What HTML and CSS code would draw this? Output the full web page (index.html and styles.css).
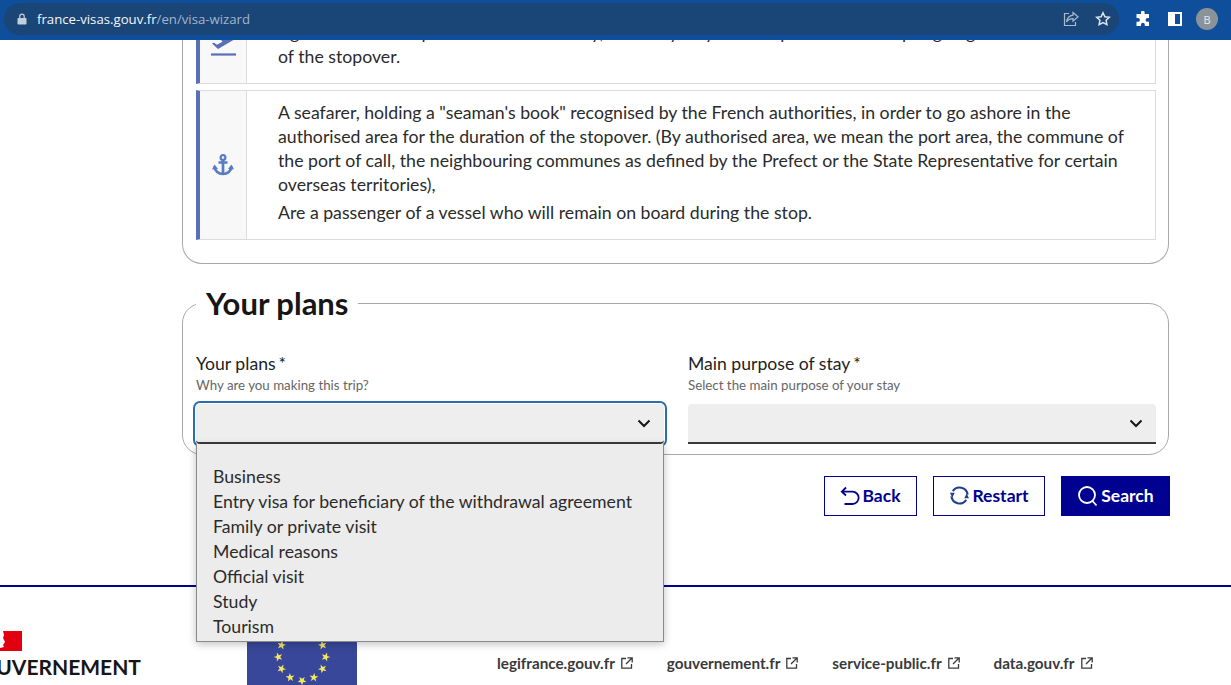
FILE: index.html
```html
<!DOCTYPE html>
<html lang="en">
<head>
    <meta charset="UTF-8">
    <meta name="viewport" content="width=device-width, initial-scale=1.0">
    <title>France-Visas - Visa wizard</title>
    <link rel="stylesheet" href="styles.css">
</head>
<body>
    <div class="browser-bar">
        <div class="address-pill">
            <svg class="lock-icon" viewBox="0 0 10 12" width="10" height="12"><path d="M2.2 5V3.4a2.8 2.8 0 0 1 5.6 0V5h.9c.5 0 .8.4.8.8v5c0 .5-.3.8-.8.8H1.300c-.5 0-.8-.3-.8-.8v-5c0-.4.3-.8.8-.8zm1.200 0h3.200V3.400a1.600 1.600 0 0 0-3.200 0z" fill="#c4cfdc"/></svg>
            <span class="url"><span class="url-host">france-visas.gouv.fr</span>/en/visa-wizard</span>
            <svg class="pill-icon" viewBox="0 0 16 16" width="16" height="16"><path d="M10 1.500l5 4.300-5 4.300V7.600c-3 0-5 1-6.500 3.400C4 7.500 6 4.700 10 4.200zM6 2.500H1.500v12h11V11" fill="none" stroke="#a9bbd0" stroke-width="1.200"/></svg>
            <svg class="pill-icon" viewBox="0 0 16 16" width="16" height="16"><path d="M8 1.800l1.900 4 4.400.5-3.200 3 .8 4.400L8 11.600l-3.900 2.100.8-4.400-3.200-3 4.400-.5z" fill="none" stroke="#dfe6ee" stroke-width="1.500"/></svg>
        </div>
        <div class="browser-actions">
            <svg viewBox="0 0 16 16" width="16" height="16"><path d="M6 1.500a1.800 1.800 0 0 1 3.600 0V3H14v4h-1.500a1.900 1.900 0 0 0 0 3.800H14V15H9.800v-1.300a1.900 1.900 0 0 0-3.800 0V15H1.500v-4.200H3a1.900 1.900 0 0 0 0-3.800H1.500V3H6z" fill="#fff"/></svg>
            <svg viewBox="0 0 14 14" width="14" height="14"><path d="M0 0h14v14H0zM7 2v10h5V2z" fill="#fff" fill-rule="evenodd"/></svg>
            <span class="avatar">B</span>
        </div>
    </div>

    <main class="page">
        <section class="wizard">
            <div class="exemption-box">
                <div class="exemption-card exemption-card-cut">
                    <div class="exemption-icon">
                        <svg viewBox="0 0 26 40" width="26" height="40"><path d="M2 24.500l2-.8 3 2 5.500-2.900-4-4.800 3-1 7.500 3.800 4.500-2.400c1-.5 2.300-.4 2.300.4l-.3 1-17.500 10.200z" fill="#5a6fb8"/><path d="M1 35.500h25" stroke="#5a6fb8" stroke-width="2.200"/></svg>
                    </div>
                    <div class="exemption-text">
                        <p>Agents on the sea port or the area nearby, who may stay on the spot until the ship is going to leave at the end</p>
                        <p>of the stopover.</p>
                    </div>
                </div>
                <div class="exemption-card">
                    <div class="exemption-icon">
                        <svg viewBox="0 0 22 22" width="22" height="22"><circle cx="11" cy="3.500" r="2.400" fill="none" stroke="#5a7bc4" stroke-width="2.200"/><path d="M6.500 8.500h9M11 6v13M2.500 12.500c.3 4.500 4 7.500 8.500 7.500s8.200-3 8.500-7.500" fill="none" stroke="#5a7bc4" stroke-width="2.700"/><path d="M0 15.500l2.500-5 3.500 4.500zM22 15.500l-2.500-5-3.500 4.500z" fill="#5a7bc4"/></svg>
                    </div>
                    <div class="exemption-text">
                        <p>A seafarer, holding a "seaman's book" recognised by the French authorities, in order to go ashore in the authorised area for the duration of the stopover. (By authorised area, we mean the port area, the commune of the port of call, the neighbouring communes as defined by the Prefect or the State Representative for certain overseas territories),</p>
                        <p class="exemption-extra">Are a passenger of a vessel who will remain on board during the stop.</p>
                    </div>
                </div>
            </div>

            <fieldset class="plans-box">
                <legend>Your plans</legend>
                <div class="plans-fields">
                    <div class="field">
                        <label class="field-label">Your plans<span class="required">*</span></label>
                        <span class="field-hint">Why are you making this trip?</span>
                        <div class="select-box select-box-open">
                            <svg class="chevron" viewBox="0 0 14 9" width="14" height="9"><path d="M1.500 1.500L7 7l5.500-5.500" fill="none" stroke="#161616" stroke-width="2"/></svg>
                            <ul class="select-menu">
                                <li>Business</li>
                                <li>Entry visa for beneficiary of the withdrawal agreement</li>
                                <li>Family or private visit</li>
                                <li>Medical reasons</li>
                                <li>Official visit</li>
                                <li>Study</li>
                                <li>Tourism</li>
                            </ul>
                        </div>
                    </div>
                    <div class="field">
                        <label class="field-label">Main purpose of stay<span class="required">*</span></label>
                        <span class="field-hint">Select the main purpose of your stay</span>
                        <div class="select-box">
                            <svg class="chevron" viewBox="0 0 14 9" width="14" height="9"><path d="M1.500 1.500L7 7l5.500-5.500" fill="none" stroke="#161616" stroke-width="2"/></svg>
                        </div>
                    </div>
                </div>
            </fieldset>

            <div class="wizard-actions">
                <button class="btn btn-back">
                    <svg viewBox="0 0 20 20" width="20" height="20"><path d="M6 1.500L1.800 5.700 6 9.500M2 5.700h10.500a6 6 0 0 1 0 12.300H4.500" fill="none" stroke="#000091" stroke-width="1.800"/></svg>
                    Back
                </button>
                <button class="btn btn-restart">
                    <svg viewBox="0 0 22 22" width="21" height="21"><path d="M4 6.500A8.500 8.500 0 0 1 19.500 10M18 15.500A8.500 8.500 0 0 1 2.500 12" fill="none" stroke="#1d3f8f" stroke-width="2.200"/><path d="M1 8l5 0-2.500 5zM21 14l-5 0 2.500-5z" fill="#1d3f8f"/></svg>
                    Restart
                </button>
                <button class="btn btn-search">
                    <svg viewBox="0 0 22 22" width="22" height="22"><circle cx="10" cy="10" r="8" fill="none" stroke="#fff" stroke-width="1.800"/><path d="M15.500 16l4 4.500" stroke="#fff" stroke-width="1.800"/></svg>
                    Search
                </button>
            </div>
        </section>

        <footer class="site-footer">
            <div class="footer-brand">
                <svg class="brand-flag" viewBox="0 0 22 20" width="22" height="20"><rect width="22" height="20" fill="#e1000f"/><path d="M0 0h3l1 4-1 3 2 4-2 3 1 2-4 1z" fill="#fff"/></svg>
                <span class="brand-name">GOUVERNEMENT</span>
            </div>
            <svg class="eu-flag" viewBox="0 0 110 73" width="110" height="73">
                <rect width="110" height="73" fill="#39479a"/>
                <g fill="#f2e85e" id="eu-stars">
                    <path id="star" d="M55 8.700l1.100 3.100 3.300.1-2.600 2 .9 3.200-2.700-1.900-2.700 1.900.9-3.200-2.600-2 3.300-.1z"/>
                    <use href="#star" transform="rotate(30 55 37)"/>
                    <use href="#star" transform="rotate(60 55 37)"/>
                    <use href="#star" transform="rotate(90 55 37)"/>
                    <use href="#star" transform="rotate(120 55 37)"/>
                    <use href="#star" transform="rotate(150 55 37)"/>
                    <use href="#star" transform="rotate(180 55 37)"/>
                    <use href="#star" transform="rotate(210 55 37)"/>
                    <use href="#star" transform="rotate(240 55 37)"/>
                    <use href="#star" transform="rotate(270 55 37)"/>
                    <use href="#star" transform="rotate(300 55 37)"/>
                    <use href="#star" transform="rotate(330 55 37)"/>
                </g>
            </svg>
            <nav class="footer-links">
                <a href="#">legifrance.gouv.fr<svg viewBox="0 0 12 12" width="12" height="12"><path d="M5 1.500H.800v9.700h9.700V7M6.500.800h4.700v4.700M11 1L5 7" fill="none" stroke="#3a3a3a" stroke-width="1.300"/></svg></a>
                <a href="#">gouvernement.fr<svg viewBox="0 0 12 12" width="12" height="12"><path d="M5 1.500H.800v9.700h9.700V7M6.500.800h4.700v4.700M11 1L5 7" fill="none" stroke="#3a3a3a" stroke-width="1.300"/></svg></a>
                <a href="#">service-public.fr<svg viewBox="0 0 12 12" width="12" height="12"><path d="M5 1.500H.800v9.700h9.700V7M6.500.800h4.700v4.700M11 1L5 7" fill="none" stroke="#3a3a3a" stroke-width="1.300"/></svg></a>
                <a href="#">data.gouv.fr<svg viewBox="0 0 12 12" width="12" height="12"><path d="M5 1.500H.800v9.700h9.700V7M6.500.800h4.700v4.700M11 1L5 7" fill="none" stroke="#3a3a3a" stroke-width="1.300"/></svg></a>
            </nav>
        </footer>
    </main>
</body>
</html>
```

FILE: styles.css
```css
* {
    margin: 0;
    padding: 0;
    box-sizing: border-box;
}

html, body {
    height: 685px;
    overflow: hidden;
}

body {
    font-family: Lato, 'Open Sans', sans-serif;
    color: #2b2b2b;
    background: white;
}

/* browser chrome */
.browser-bar {
    height: 40px;
    background: #0f4e9a;
    display: flex;
    align-items: center;
    position: relative;
    z-index: 2;
    padding: 3px 0 5px 4px;
}

.address-pill {
    width: 1115px;
    height: 32px;
    background: #1a4577;
    border-radius: 16px;
    display: flex;
    align-items: center;
    padding: 0 8px 0 13px;
}

.lock-icon {
    margin-right: 10px;
}

.url {
    flex: 1;
    font-family: 'Open Sans', sans-serif;
    font-size: 13.200px;
    color: #a3b5cb;
}

.url-host {
    color: #f4f7fa;
}

.pill-icon {
    margin-left: 16px;
}

.browser-actions {
    flex: 1;
    display: flex;
    align-items: center;
    padding-left: 16px;
    gap: 17px;
}

.avatar {
    width: 22px;
    height: 22px;
    margin-left: -3px;
    border-radius: 50%;
    background: #8c9398;
    color: #e8eaec;
    font-family: 'Open Sans', sans-serif;
    font-size: 11px;
    display: flex;
    align-items: center;
    justify-content: center;
}

/* page */
.page {
    height: 645px;
    overflow: hidden;
}

.wizard {
    width: 988px;
    margin-left: 182px;
}

.exemption-box {
    width: 987px;
    height: 224px;
    border: 1px solid #a8a8a8;
    border-top: none;
    border-radius: 0 0 20px 20px;
    padding: 0 12px 0 13px;
}

.exemption-card {
    display: flex;
    height: 150px;
    border: 1px solid #dcdcdc;
    border-left: 4px solid #5a6fb8;
    background: white;
}

.exemption-card-cut {
    height: 44px;
    border-top: none;
    margin-bottom: 6px;
    overflow: hidden;
}

.exemption-icon {
    width: 47px;
    flex-shrink: 0;
    background: #f8f8f8;
    border-right: 1px solid #dcdcdc;
    display: flex;
    align-items: center;
    justify-content: center;
}

.exemption-card-cut .exemption-icon {
    align-items: flex-end;
    padding-bottom: 24px;
}

.exemption-text {
    padding: 10px 28px 0 31px;
    font-size: 17.700px;
    line-height: 24px;
}

.exemption-card-cut .exemption-text {
    margin-top: -19px;
    padding-top: 0;
    white-space: nowrap;
}

.exemption-extra {
    margin-top: 4px;
}

/* your plans */
.plans-box {
    width: 987px;
    margin-top: 22px;
    height: 169px;
    border: 1px solid #a8a8a8;
    border-radius: 20px;
    padding: 0 12px 0 13px;
}

.plans-box legend {
    margin-left: 0;
    padding: 0 10px;
    font-size: 31px;
    font-weight: 700;
    line-height: 35px;
    color: #161616;
}

.plans-fields {
    display: grid;
    grid-template-columns: 1fr 1fr;
    gap: 24px;
    padding-top: 31px;
}

.field-label {
    display: block;
    font-size: 17.600px;
    line-height: 24px;
    color: #1e1e1e;
}

.required {
    margin-left: 3px;
}

.field-hint {
    display: block;
    font-size: 13.300px;
    line-height: 18px;
    color: #666;
}

.select-box {
    position: relative;
    height: 40px;
    margin-top: 10px;
    background: #eee;
    border-bottom: 2px solid #3a3a3a;
    border-radius: 4px 4px 0 0;
}

.select-box-open {
    outline: 2px solid #2a6db0;
    outline-offset: 1px;
    border-radius: 4px;
}

.chevron {
    position: absolute;
    right: 13px;
    top: 15px;
}

.select-menu {
    position: absolute;
    top: 40px;
    left: 0;
    width: 468px;
    height: 198px;
    list-style: none;
    background: #ececec;
    border: 1px solid #8a8a8a;
    border-top: none;
    box-shadow: 0 2px 8px rgba(0, 0, 0, 0.25);
    padding: 20px 0 0 16px;
    font-size: 17.700px;
    line-height: 25px;
    z-index: 3;
}

/* buttons */
.wizard-actions {
    display: flex;
    justify-content: flex-end;
    gap: 16px;
    margin-top: 21px;
}

.btn {
    height: 40px;
    padding-bottom: 1px;
    display: flex;
    align-items: center;
    justify-content: center;
    gap: 2px;
    font-family: inherit;
    font-size: 17.500px;
    font-weight: 700;
    color: #000091;
    background: white;
    border: 1px solid #000091;
    cursor: pointer;
}

.btn-back {
    width: 93px;
}

.btn-restart {
    width: 112px;
}

.btn-search {
    width: 109px;
    background: #000091;
    color: white;
}

/* footer */
.site-footer {
    margin-top: 69px;
    border-top: 2px solid #000091;
    display: flex;
    height: 200px;
}

.footer-brand {
    width: 283px;
    margin-left: -36px;
    padding-top: 44px;
    overflow: hidden;
    flex-shrink: 0;
}

.brand-flag {
    display: block;
    margin-left: 36px;
}

.brand-name {
    display: block;
    font-size: 21px;
    font-weight: 700;
    color: #161616;
    line-height: 32px;
}

.eu-flag {
    margin-top: 33px;
    flex-shrink: 0;
}

.footer-links {
    display: flex;
    gap: 34px;
    margin-left: 140px;
    padding-top: 65px;
    font-size: 15.250px;
    font-weight: 700;
}

.footer-links a {
    display: flex;
    align-items: center;
    gap: 6px;
    height: 22px;
    color: #3a3a3a;
    text-decoration: none;
}
```
